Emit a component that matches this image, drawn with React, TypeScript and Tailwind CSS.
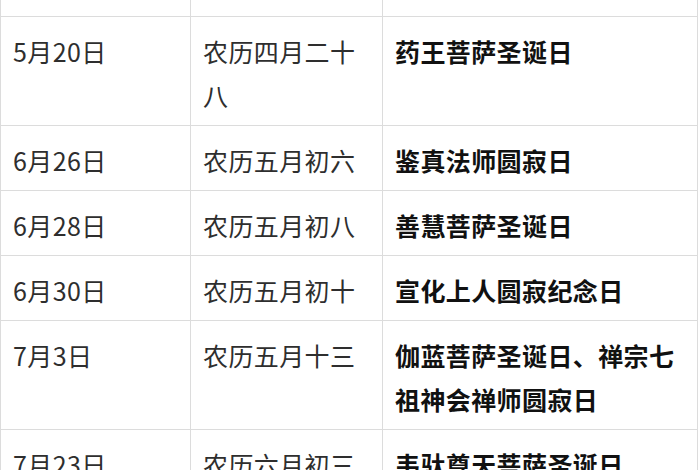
const rows: [string, string, string][] = [
  ['5月20日', '农历四月二十八', '药王菩萨圣诞日'],
  ['6月26日', '农历五月初六', '鉴真法师圆寂日'],
  ['6月28日', '农历五月初八', '善慧菩萨圣诞日'],
  ['6月30日', '农历五月初十', '宣化上人圆寂纪念日'],
  ['7月3日', '农历五月十三', '伽蓝菩萨圣诞日、禅宗七祖神会禅师圆寂日'],
  ['7月23日', '农历六月初三', '韦驮尊天菩萨圣诞日'],
];

const cell = 'border border-[#dcdcdc] align-top pl-[12px] pr-[12px] pt-[12px] pb-[8px] leading-[44px]';

export default function App() {
  return (
    <div
      className="w-[700px] h-[470px] overflow-hidden bg-white"
      style={{ fontFamily: '"Noto Sans CJK SC", "Microsoft YaHei", sans-serif' }}
    >
      <table className="table-fixed border-collapse w-[697px] text-[25px] tracking-[0.4px]">
        <colgroup>
          <col className="w-[190px]" />
          <col className="w-[192px]" />
          <col className="w-[315px]" />
        </colgroup>
        <tbody>
          {/* previous row, cut off at the top */}
          <tr className="h-[16px]">
            <td className="border border-[#dcdcdc] border-t-0" />
            <td className="border border-[#dcdcdc] border-t-0" />
            <td className="border border-[#dcdcdc] border-t-0" />
          </tr>
          {rows.map(([date, lunar, name]) => (
            <tr key={date}>
              <td className={`${cell} text-[#2e2e2e]`}>{date}</td>
              <td className={`${cell} text-[#2e2e2e]`}>{lunar}</td>
              <td className={`${cell} text-[#111] font-bold`}>{name}</td>
            </tr>
          ))}
        </tbody>
      </table>
    </div>
  );
}
